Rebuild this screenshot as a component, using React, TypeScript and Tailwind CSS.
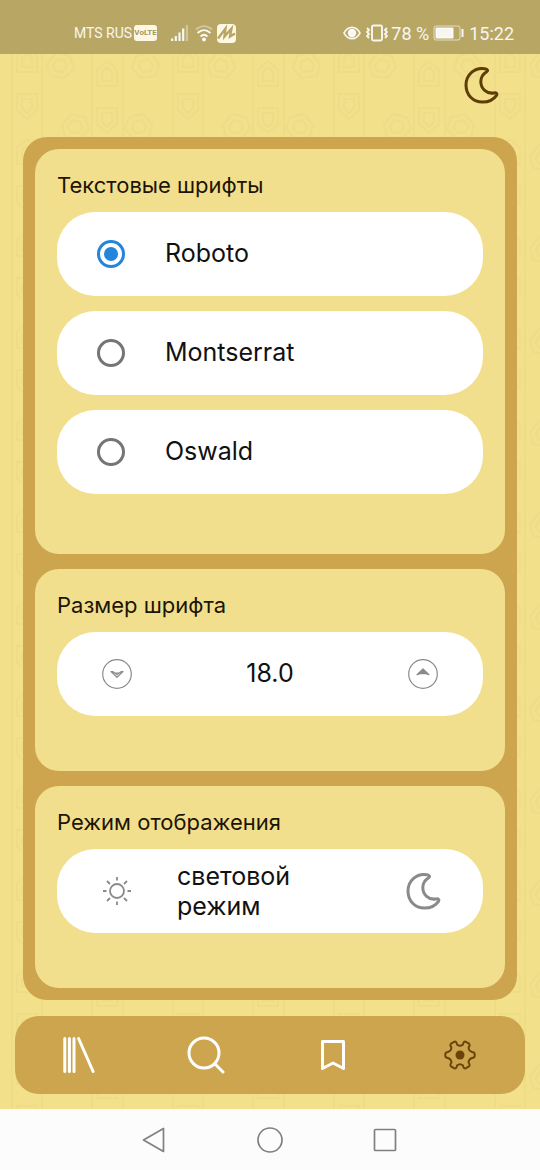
import { useState } from "react";
import type { ReactNode } from "react";

const FONTS = ["Roboto", "Montserrat", "Oswald"];

function MoonIcon({ className }: { className?: string }) {
  return (
    <svg viewBox="0 0 36 38" className={className} fill="none" stroke="currentColor" strokeWidth="3" strokeLinejoin="round">
      <path d="M22 2.800C11.500 .8 3 9 3 19C3 29 10 36 19.500 36C26 36 31 33 33.500 29.300C34.500 27.500 33.200 26.300 31.200 26.900C23.500 28.300 17.800 22.500 17.800 15.500C17.800 11.500 20 8 23.700 5.700C25.200 4.500 24.500 3.200 22 2.800Z" />
    </svg>
  );
}

function SunIcon() {
  return (
    <svg viewBox="0 0 30 30" className="size-[30px]" fill="none" stroke="currentColor" strokeWidth="1.800">
      <circle cx="15" cy="15" r="7" />
      <path d="M15 1v3.500M15 25.500v3.500M1 15h3.500M25.500 15h3.500M5 5l3 3M22 22l3 3M5 25l3-3M22 8l3-3" />
    </svg>
  );
}

function PatternBackground() {
  return (
    <svg className="absolute inset-0 -z-10 h-full w-full" aria-hidden="true">
      <defs>
        <g id="cell">
          <path d="M-10-12h20v16l-10 9-10-9z" />
          <path d="M-5-7h10v9l-5 5-5-5z" />
        </g>
        <g id="petal">
          <path d="M-13-2l9-11 14 3 4 12-9 10-15-2z" />
          <path d="M-7-1l5-6 7 2 2 6-4 5-8-1z" />
        </g>
        <pattern id="ornament" width="161" height="92" patternUnits="userSpaceOnUse">
          <g fill="none" stroke="#e6d380" strokeWidth="2" strokeLinejoin="round" opacity="0.35">
            <use href="#cell" x="27" y="14" />
            <use href="#cell" transform="translate(27 60) scale(1 -1)" />
            <use href="#cell" x="107" y="28" />
            <use href="#cell" transform="translate(107 74) scale(1 -1)" />
            <use href="#petal" x="75" y="35" />
            <use href="#petal" x="60" y="66" />
            <use href="#petal" transform="translate(139 35) scale(-1 1)" />
            <use href="#petal" transform="translate(146 66) scale(-1 1)" />
            <path d="M42 0v92M12 0v92M92 0v92M123 0v92" />
          </g>
        </pattern>
      </defs>
      <rect width="100%" height="100%" fill="url(#ornament)" />
    </svg>
  );
}

function StatusBar() {
  return (
    <div className="flex h-[54px] items-center justify-between bg-[#b8a664] pt-3 pr-[26px] pl-[74px] font-[Roboto,sans-serif] text-white/90">
      <div className="flex items-center">
        <span className="text-[14px]">MTS RUS</span>
        <span className="ml-[2px] flex h-4 w-[23px] items-center justify-center rounded-[3px] bg-[#fdf8e6] text-[8px] font-bold text-[#a8965a]">VoLTE</span>
        <svg viewBox="0 0 18 18" className="ml-[14px] size-[18px]" fill="currentColor">
          <path d="M0 14.500h2.200v2.500H0zM3.700 12h2.200v5H3.700zM7.400 8.500h2.200V17H7.400zM11.100 4.500h2.200V17h-2.200z" />
          <path d="M14.800 1H17v16h-2.200z" opacity="0.4" />
        </svg>
        <svg viewBox="0 0 18 18" className="ml-[6px] size-[18px]" fill="none" stroke="currentColor" strokeWidth="2">
          <path d="M1 5.500c5-4.500 11-4.500 16 0" opacity="0.4" />
          <path d="M2.500 9c4-3.800 9-3.800 13 0M5.500 12.500c2.200-2 4.800-2 7 0" />
          <circle cx="9" cy="15.500" r="1" fill="currentColor" />
        </svg>
        <svg viewBox="0 0 19 19" className="ml-[4px] size-[19px]">
          <rect width="19" height="19" rx="4" fill="#fdf8e6" />
          <path d="M1 14.500L8.500 4.500L7.500 12.500L14.500 4.500L13 12.500L18 9.500" fill="none" stroke="#b8a664" strokeWidth="2.400" />
        </svg>
      </div>
      <div className="flex items-center">
        <svg viewBox="0 0 18 14" className="h-[14px] w-[18px]" fill="none" stroke="currentColor" strokeWidth="1.600">
          <path d="M1 7c4-7.500 12-7.500 16 0c-4 7.500-12 7.500-16 0z" />
          <circle cx="9" cy="7" r="3.400" fill="currentColor" />
        </svg>
        <svg viewBox="0 0 22 18" className="ml-[5px] h-[18px] w-[22px]" fill="none" stroke="currentColor" strokeWidth="1.900">
          <rect x="6" y="1.500" width="10" height="15" rx="1.500" />
          <path d="M1 4l2 2-2 2 2 2-2 2 2 2M21 4l-2 2 2 2-2 2 2 2-2 2" />
        </svg>
        <span className="ml-[3px] text-[18px]">78 %</span>
        <svg viewBox="0 0 31 16" className="ml-[4px] h-4 w-[31px]" fill="none" stroke="currentColor">
          <rect x="1" y="1" width="26" height="14" rx="2" opacity="0.7" />
          <path d="M3 3h17v10H3z" fill="currentColor" />
          <path d="M29.500 4v8" strokeWidth="2" />
        </svg>
        <span className="ml-[5px] text-[18px]">15:22</span>
      </div>
    </div>
  );
}

function SettingsCard({ title, children }: { title: string; children: ReactNode }) {
  return (
    <section className="rounded-[24px] bg-[#f2df8e] px-[22px] pt-[22px] pb-[55px]">
      <h2 className="mb-[13px] text-[22px] leading-[28px] text-[#1c1404]">{title}</h2>
      {children}
    </section>
  );
}

function NavButton({ label, children }: { label: string; children: ReactNode }) {
  return (
    <button type="button" aria-label={label} className="flex items-center justify-center">
      {children}
    </button>
  );
}

export default function App() {
  const [font, setFont] = useState("Roboto");
  const [size, setSize] = useState(18);
  const [dark, setDark] = useState(false);

  return (
    <div className="relative isolate flex min-h-screen flex-col bg-[#f2e08b] font-[Inter,'Noto_Sans',sans-serif] text-[#111111]">
      <PatternBackground />
      <StatusBar />

      <header className="flex justify-end px-[41px] pt-3 pb-[33px]">
        <button type="button" aria-label="Тема" onClick={() => setDark(!dark)} className="text-[#5f3d06]">
          <MoonIcon className="h-[38px] w-9" />
        </button>
      </header>

      <main className="mx-[23px] flex flex-col gap-[15px] rounded-[24px] bg-[#cca54e] p-3">
        <SettingsCard title="Текстовые шрифты">
          <div className="mb-[5px] flex flex-col gap-[15px]">
            {FONTS.map((name) => (
              <label key={name} className="flex h-[84px] items-center rounded-[38px] bg-white pl-10 text-[25px]">
                <input
                  type="radio"
                  name="font"
                  value={name}
                  checked={font === name}
                  onChange={() => setFont(name)}
                  className="mr-10 size-7 appearance-none rounded-full border-3 border-[#757575] bg-clip-content p-1 checked:border-[#2485dc] checked:bg-[#2485dc]"
                />
                {name}
              </label>
            ))}
          </div>
        </SettingsCard>

        <SettingsCard title="Размер шрифта">
          <div className="flex h-[84px] items-center justify-between rounded-[38px] bg-white px-[45px] text-[25px]">
            <button type="button" aria-label="Уменьшить" onClick={() => setSize(size - 1)} className="text-[#8a8a8a]">
              <svg viewBox="0 0 30 30" className="size-[30px]" fill="none" stroke="currentColor" strokeLinejoin="round">
                <circle cx="15" cy="15" r="14.300" strokeWidth="1.200" />
                <path d="M9 12.500l6 5.800 6-5.800-1.500 0-2.500 1.500h-4l-2.500-1.500zM13 14l2 1.600 2-1.600" strokeWidth="1.200" />
              </svg>
            </button>
            <output>{size.toFixed(1)}</output>
            <button type="button" aria-label="Увеличить" onClick={() => setSize(size + 1)} className="text-[#8a8a8a]">
              <svg viewBox="0 0 30 30" className="size-[30px]" fill="none" stroke="currentColor" strokeLinejoin="round">
                <circle cx="15" cy="15" r="14.300" strokeWidth="1.200" />
                <path d="M9 15.700l6-5.700 6 5.700-3-1h-6z" fill="currentColor" strokeWidth="1.200" />
              </svg>
            </button>
          </div>
        </SettingsCard>

        <SettingsCard title="Режим отображения">
          <div className="flex h-[84px] items-center rounded-[38px] bg-white pr-[42px] pl-[45px] text-[#8a8a8a]">
            <button type="button" aria-label="Светлая тема" onClick={() => setDark(false)}>
              <SunIcon />
            </button>
            <p className="ml-[45px] w-[130px] text-[25px] leading-[30px] text-[#111111]">световой режим</p>
            <button type="button" aria-label="Тёмная тема" onClick={() => setDark(true)} className="ml-auto">
              <MoonIcon className="h-[38px] w-9" />
            </button>
          </div>
        </SettingsCard>
      </main>

      <nav className="mx-[15px] mt-4 mb-[15px] grid h-[78px] grid-cols-4 rounded-[24px] bg-[#cca54e] pr-0.5 text-white">
        <NavButton label="Библиотека">
          <svg viewBox="0 0 32 38" className="h-[38px] w-8" fill="none" stroke="currentColor" strokeWidth="3" strokeLinecap="round">
            <path d="M1.800 2.500v33M6.400 2.500v33M11 2.500v33M15.600 2.500l14.500 33" />
          </svg>
        </NavButton>
        <NavButton label="Поиск">
          <svg viewBox="0 0 38 38" className="size-[38px]" fill="none" stroke="currentColor" strokeWidth="3" strokeLinecap="round">
            <circle cx="17" cy="17" r="15" />
            <path d="M28 28l8 8" />
          </svg>
        </NavButton>
        <NavButton label="Закладки">
          <svg viewBox="0 0 26 32" className="h-8 w-[26px]" fill="none" stroke="currentColor" strokeWidth="3" strokeLinejoin="round">
            <path d="M2.500 2.500h21v27l-10.500-5.500-10.500 5.500z" />
          </svg>
        </NavButton>
        <NavButton label="Настройки">
          <svg viewBox="0 0 32 30" className="h-[30px] w-8 text-[#6b430a]" fill="none" stroke="currentColor" strokeWidth="1.900" strokeLinejoin="round">
            <path d="M13 4.500Q16 7 19 4.500Q19.500 1.200 21.500 1.600L25 3.600Q26.500 5 24.500 7.500Q24.800 11 28 12Q30.800 12 30.800 15Q30.800 18 28 18Q24.800 19 24.500 22.500Q26.500 25 25 26.400L21.500 28.400Q19.500 28.800 19 25.500Q16 23 13 25.500Q12.500 28.800 10.500 28.400L7 26.400Q5.500 25 7.500 22.500Q7.200 19 4 18Q1.200 18 1.200 15Q1.200 12 4 12Q7.200 11 7.500 7.500Q5.500 5 7 3.600L10.500 1.600Q12.500 1.200 13 4.500Z" />
            <circle cx="16" cy="15" r="4.500" fill="currentColor" stroke="none" />
          </svg>
        </NavButton>
      </nav>

      <footer className="flex h-[61px] items-center justify-center gap-[90px] bg-[#fcfcfc] text-[#808080]">
        <button type="button" aria-label="Назад">
          <svg viewBox="0 0 26 26" className="size-[26px]" fill="none" stroke="currentColor" strokeWidth="1.700" strokeLinejoin="round">
            <path d="M2.500 13L22.500 1.500v23z" />
          </svg>
        </button>
        <button type="button" aria-label="Домой">
          <svg viewBox="0 0 26 26" className="size-[26px]" fill="none" stroke="currentColor" strokeWidth="1.700">
            <circle cx="13" cy="13" r="12" />
          </svg>
        </button>
        <button type="button" aria-label="Недавние">
          <svg viewBox="0 0 26 26" className="size-[26px]" fill="none" stroke="currentColor" strokeWidth="1.700">
            <rect x="1.500" y="2.500" width="21" height="21" rx="1" />
          </svg>
        </button>
      </footer>
    </div>
  );
}
